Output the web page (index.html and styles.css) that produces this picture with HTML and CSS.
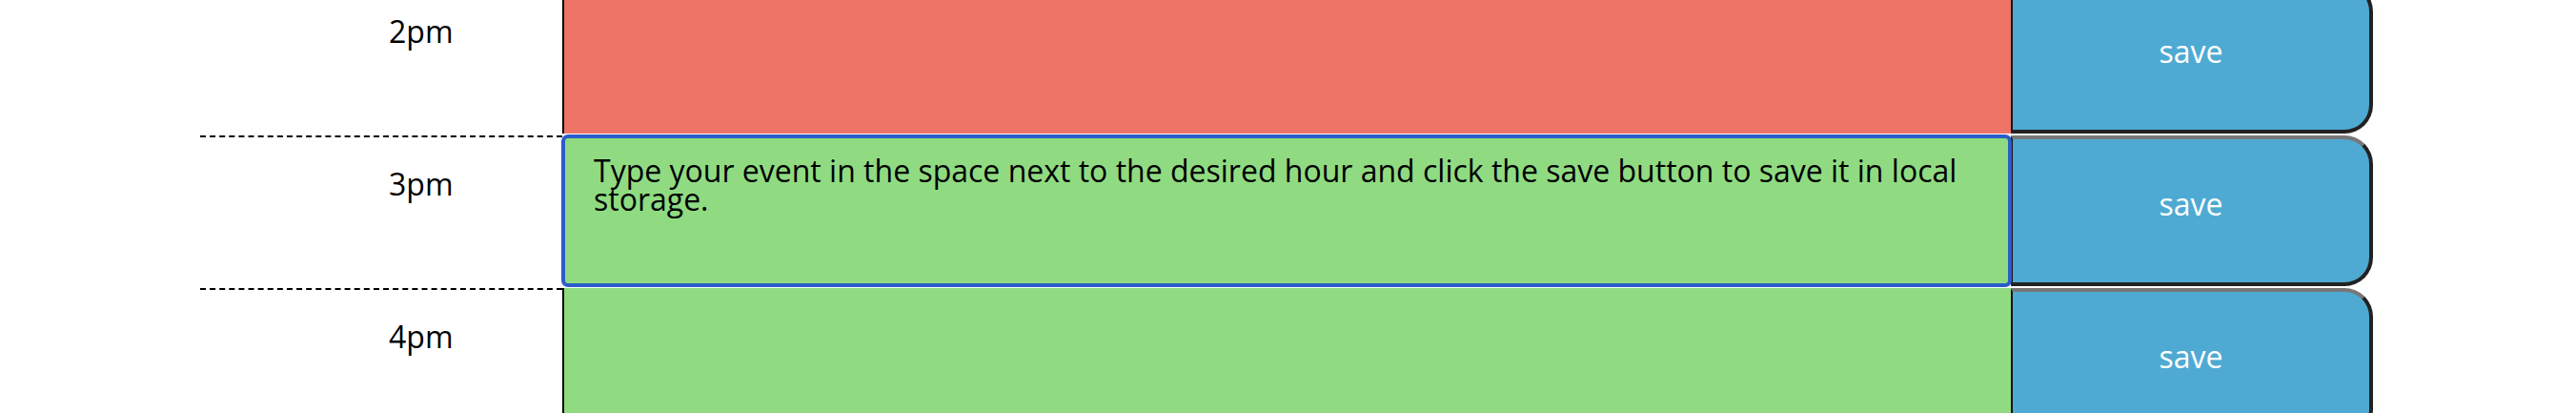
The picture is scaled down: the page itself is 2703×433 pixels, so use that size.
FILE: index.html
```html
<!DOCTYPE html>
<html lang="en">
<head>
<meta charset="utf-8">
<title>Work Day Scheduler</title>
<link rel="stylesheet" href="styles.css">
</head>
<body>
<div class="planner">
  <div class="row">
    <div class="hour">2pm</div>
    <textarea class="event present"></textarea>
    <button class="save-btn">save</button>
  </div>
  <div class="row">
    <div class="hour">3pm</div>
    <textarea class="event future focused">Type your event in the space next to the desired hour and click the save button to save it in local storage.</textarea>
    <button class="save-btn">save</button>
  </div>
  <div class="row">
    <div class="hour">4pm</div>
    <textarea class="event future"></textarea>
    <button class="save-btn">save</button>
  </div>
</div>
</body>
</html>
```

FILE: styles.css
```css
html, body {
  margin: 0;
  padding: 0;
  background: #ffffff;
  font-family: "Open Sans", "Noto Sans", sans-serif;
  overflow: hidden;
}

.planner {
  margin-top: -20px;
  margin-left: 210px;
  width: 2280px;
}

.row {
  display: flex;
  height: 160px;
  box-sizing: border-box;
  border-top: 2px solid #ffffff;
}

.hour {
  width: 380px;
  flex: none;
  box-sizing: border-box;
  border-top: 2px dashed #000000;
  padding-left: 198px;
  padding-top: 25px;
  font-size: 32px;
  line-height: 48px;
  color: #000000;
}

.event {
  width: 1520px;
  flex: none;
  height: 158px;
  box-sizing: border-box;
  margin: 0;
  border: none;
  border-left: 2px solid #000000;
  padding: 22px 31px 0 31px;
  font-family: "Open Sans", "Noto Sans", sans-serif;
  font-size: 32px;
  line-height: 30px;
  color: #000000;
  resize: none;
  overflow: hidden;
}

.present {
  background-color: #ee7468;
}

.future {
  background-color: #90db82;
}

.focused {
  outline: 4px solid #2b5dca;
  outline-offset: -3px;
  border-radius: 6px;
  position: relative;
  z-index: 1;
}

.save-btn {
  width: 380px;
  flex: none;
  height: 158px;
  box-sizing: border-box;
  margin: 0;
  display: flex;
  justify-content: center;
  align-items: flex-start;
  padding: 44px 0 0 0;
  background-color: #4eaad2;
  color: #ffffff;
  font-family: "Open Sans", "Noto Sans", sans-serif;
  font-size: 32px;
  line-height: 48px;
  border-style: solid;
  border-width: 4px 4px 4px 2px;
  border-color: #777777 #222222 #222222 #111111;
  border-radius: 0 30px 30px 0;
}
```
